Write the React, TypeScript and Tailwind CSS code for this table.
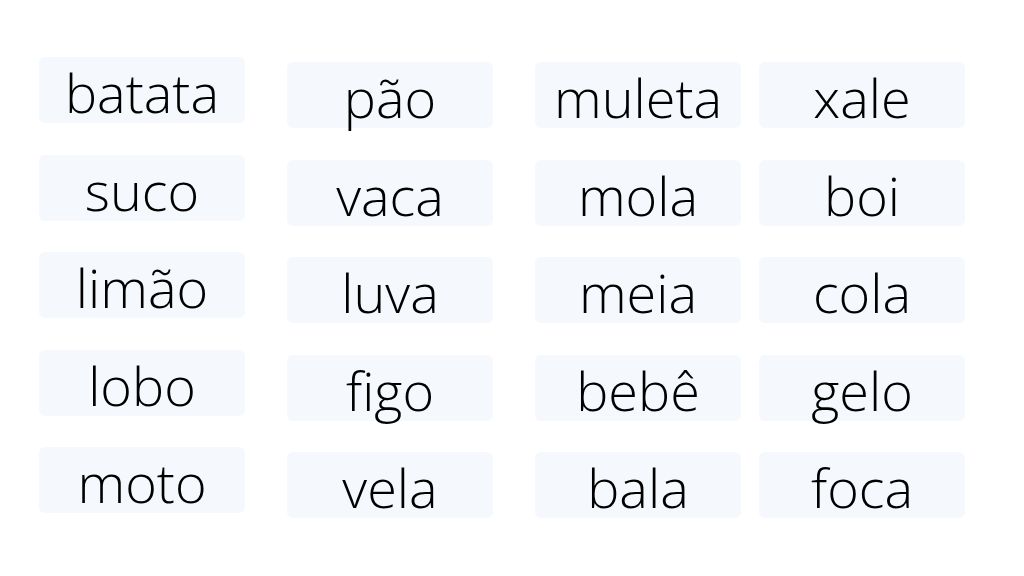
import React from "react";

const columns: { words: string[]; top: string; left: string }[] = [
  { words: ["batata", "suco", "limão", "lobo", "moto"], top: "mt-[57px]", left: "ml-[39px]" },
  { words: ["pão", "vaca", "luva", "figo", "vela"], top: "mt-[62px]", left: "ml-[42px]" },
  { words: ["muleta", "mola", "meia", "bebê", "bala"], top: "mt-[62px]", left: "ml-[42px]" },
  { words: ["xale", "boi", "cola", "gelo", "foca"], top: "mt-[62px]", left: "ml-[18px]" },
];

export default function App() {
  return (
    <div
      className="w-[1024px] h-[576px] bg-white flex overflow-hidden"
      style={{ fontFamily: '"Open Sans", sans-serif' }}
    >
      {columns.map((col, i) => (
        <div key={i} className={`flex flex-col gap-[31.5px] ${col.top} ${col.left}`}>
          {col.words.map((w) => (
            <div
              key={w}
              className="w-[206px] h-[66px] rounded-[6px] bg-[#f5f9fd] flex items-center justify-center pt-[4px]"
            >
              <span className="text-[54px] font-light leading-none text-black">{w}</span>
            </div>
          ))}
        </div>
      ))}
    </div>
  );
}
